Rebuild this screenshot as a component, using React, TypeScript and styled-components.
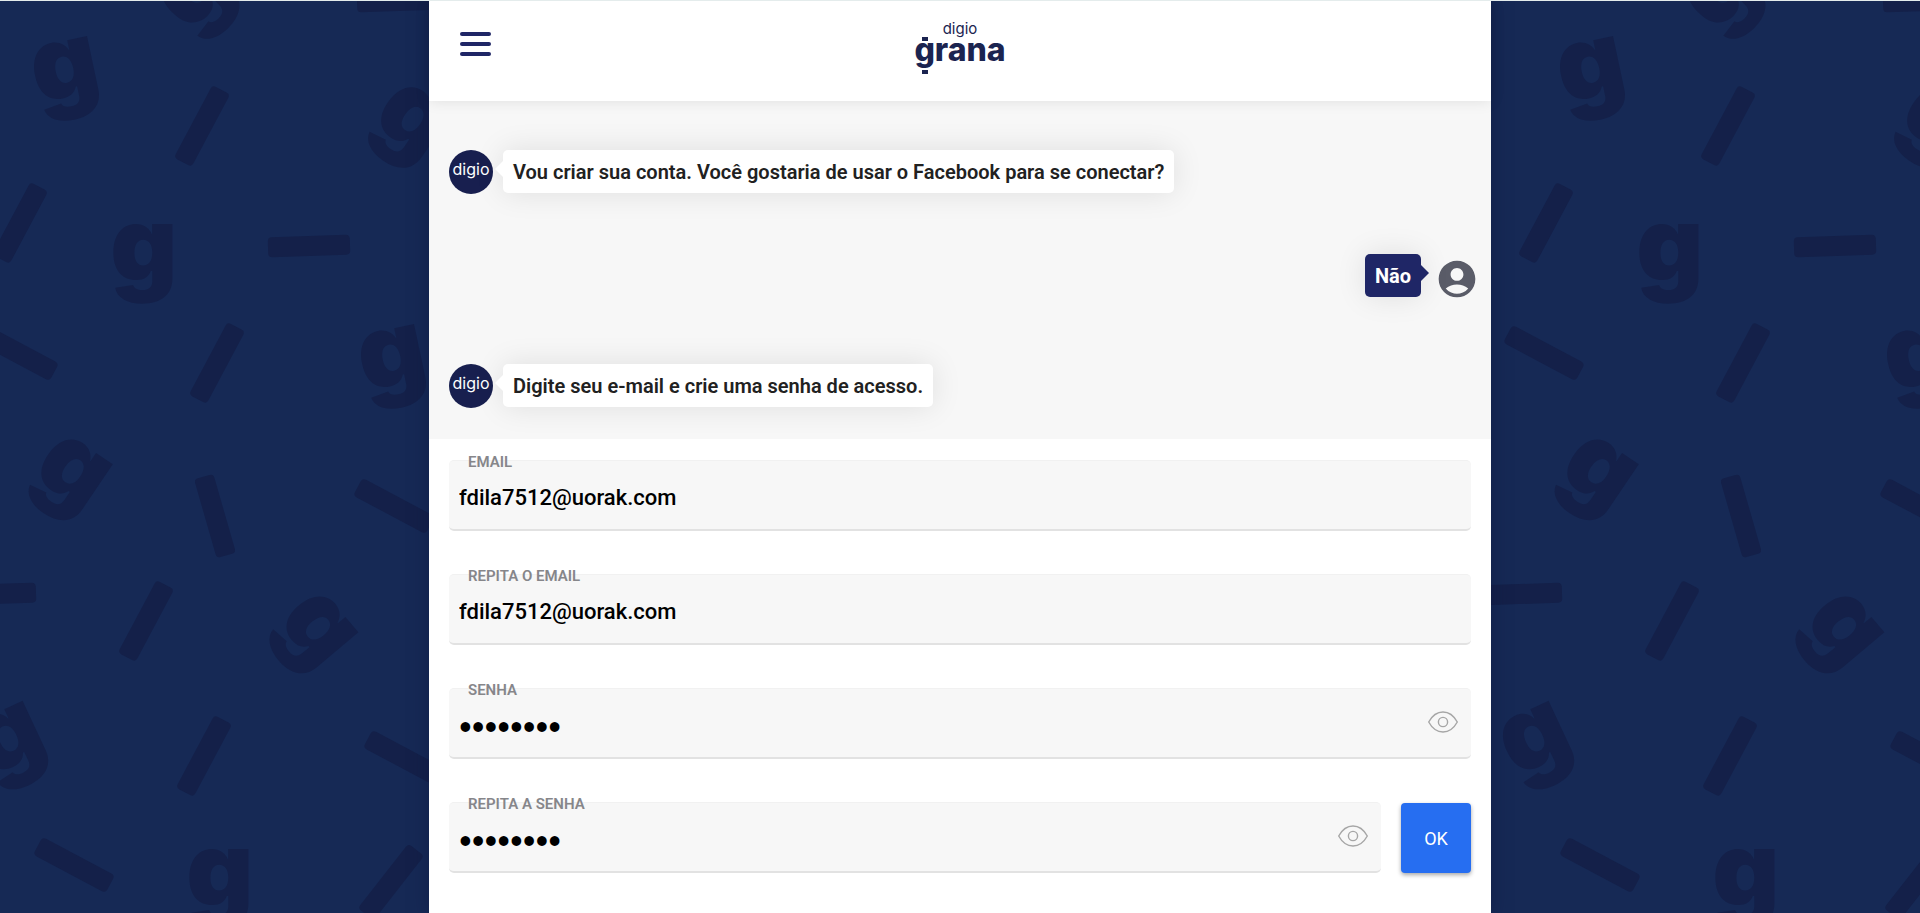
import React, { useState } from "react";
import styled, { createGlobalStyle, css } from "styled-components";
import { MdAccountCircle } from "react-icons/md";

const navy = "#1f2666";

const GlobalStyle = createGlobalStyle`
  *, *::before, *::after { box-sizing: border-box; }
  body {
    margin: 0;
    background: #162955;
    font-family: Roboto, "Liberation Sans", sans-serif;
  }
`;

const Page = styled.div`
  position: relative;
  display: flex;
  justify-content: center;
  min-height: 100vh;
  border-top: 1px solid #e4ecec;
  overflow: hidden;
`;

const Backdrop = styled.svg`
  position: absolute;
  inset: 0;
  width: 100%;
  height: 100%;
`;

const Panel = styled.main`
  position: relative;
  display: flex;
  flex-direction: column;
  width: 100%;
  max-width: 1062px;
  background: #fff;
  box-shadow: 0 0 16px rgba(12, 20, 60, 0.5);
`;

const Header = styled.header`
  position: relative;
  z-index: 1;
  display: grid;
  grid-template-columns: 1fr auto 1fr;
  align-items: start;
  height: 100px;
  padding: 16px 30px;
  background: #fff;
  box-shadow: 0 0 14px rgba(0, 0, 0, 0.1);
`;

const MenuButton = styled.button`
  display: flex;
  flex-direction: column;
  gap: 6px;
  justify-self: start;
  padding: 15px 1px;
  border: 0;
  background: none;
  cursor: pointer;
`;

const MenuLine = styled.span`
  width: 31px;
  height: 4px;
  border-radius: 2px;
  background: ${navy};
`;

const Logo = styled.svg`
  display: block;
  width: 100px;
  height: 64px;
  fill: #1b2450;
  font-family: Inter, sans-serif;
`;

const Chat = styled.section`
  display: flex;
  flex-direction: column;
  gap: 60px;
  padding: 49px 12px 31px 20px;
  background: #f7f7f7;
`;

const Message = styled.div<{ $mine?: boolean }>`
  display: flex;
  align-items: flex-start;
  gap: ${(p) => (p.$mine ? 14 : 10)}px;
  justify-content: ${(p) => (p.$mine ? "flex-end" : "flex-start")};
  min-height: ${(p) => (p.$mine ? 50 : 44)}px;
`;

const Bubble = styled.p<{ $mine?: boolean }>`
  position: relative;
  margin: 0;
  padding: 11px 10px 9px;
  border-radius: 5px;
  font-size: 20px;
  line-height: 23px;
  font-weight: ${(p) => (p.$mine ? 700 : 600)};
  color: ${(p) => (p.$mine ? "#fff" : "#212121")};
  background: ${(p) => (p.$mine ? navy : "#fff")};
  box-shadow: 0 0 30px rgba(0, 0, 0, 0.1);

  &::after {
    content: "";
    position: absolute;
    top: 11px;
    border: 8px solid transparent;
    ${(p) =>
      p.$mine
        ? css`
            left: 100%;
            border-left-color: ${navy};
            border-right-width: 0;
          `
        : css`
            right: 100%;
            border-right-color: #fff;
            border-left-width: 0;
          `}
  }
`;

const BotAvatar = styled.svg`
  flex: none;
  width: 44px;
  height: 44px;
  font-family: Inter, sans-serif;
`;

const UserAvatar = styled(MdAccountCircle)`
  flex: none;
  width: 44px;
  height: 44px;
  margin-top: 3px;
  color: #5a5c68;
`;

const Form = styled.form`
  display: flex;
  flex-direction: column;
  gap: 43px;
  padding: 21px 20px 40px;
`;

const FormRow = styled.div`
  display: flex;
  align-items: flex-end;
  gap: 20px;
`;

const Field = styled.div`
  position: relative;
  flex: 1;
  display: flex;
  align-items: center;
  height: 71px;
  padding-right: 12px;
  border-top: 1px solid #f1f1f1;
  border-bottom: 2px solid #e2e2e2;
  border-radius: 5px;
  background: #f7f7f7;
`;

const Label = styled.label`
  position: absolute;
  top: -7px;
  left: 19px;
  font-size: 15px;
  line-height: 16px;
  font-weight: 600;
  text-transform: uppercase;
  color: #86868a;
`;

const Input = styled.input`
  flex: 1;
  min-width: 0;
  height: 68px;
  padding: 4px 10px 0;
  border: 0;
  outline: 0;
  background: none;
  font-family: inherit;
  font-size: 22px;
  font-weight: 500;
  color: #000;

  &[type="password"] {
    font-family: Lato, sans-serif;
    font-weight: 700;
  }
`;

const EyeButton = styled.button`
  display: flex;
  padding: 0 0 2px;
  border: 0;
  background: none;
  cursor: pointer;
`;

const SubmitButton = styled.button`
  width: 70px;
  height: 70px;
  border: 0;
  border-radius: 4px;
  background: #266ef1;
  box-shadow: 0 2px 4px rgba(0, 0, 0, 0.35);
  font-family: inherit;
  font-size: 18px;
  color: #fff;
  cursor: pointer;
`;

// Confetti of the backdrop: [centre x, centre y, rotation in degrees]
const bars = [
  [398, 0, -2],
  [202, 125, -62],
  [20, 222, -62],
  [309, 245, -2],
  [18, 352, 28],
  [217, 362, -62],
  [215, 515, 74],
  [394, 505, 28],
  [-5, 593, -2],
  [146, 620, -62],
  [204, 755, -62],
  [404, 757, 28],
  [74, 864, 28],
  [391, 881, -52],
];

const letters = [
  [65, 69, -12],
  [194, -10, -44],
  [413, 119, 35],
  [144, 252, 0],
  [392, 357, -12],
  [73, 471, 34],
  [318, 628, 50],
  [9, 738, -25],
  [220, 877, 0],
];

function Confetti() {
  return (
    <Backdrop aria-hidden="true">
      <defs>
        <g id="confetti" fill="#142049">
          {bars.map(([x, y, angle]) => (
            <rect
              key={`${x}-${y}`}
              x={-41}
              y={-10}
              width={82}
              height={20}
              rx={4}
              transform={`translate(${x} ${y}) rotate(${angle})`}
            />
          ))}
          {letters.map(([x, y, angle]) => (
            <text
              key={`${x}-${y}`}
              x={0}
              y={28}
              textAnchor="middle"
              fontFamily="Inter, sans-serif"
              fontWeight={900}
              fontSize={104}
              transform={`translate(${x} ${y}) rotate(${angle})`}
            >
              g
            </text>
          ))}
        </g>
      </defs>
      <use href="#confetti" />
      <use href="#confetti" x={1526} />
    </Backdrop>
  );
}

function EyeIcon() {
  return (
    <svg width="32" height="24" viewBox="0 0 32 24" fill="none" stroke="#a6a6a6" strokeWidth="1.4" aria-hidden="true">
      <path d="M1.7 12C5 6 10 2 16 2s11 4 14.300 10C27 18 22 22 16 22S5 18 1.700 12Z" strokeLinejoin="round" />
      <circle cx="16" cy="12" r="4.600" />
    </svg>
  );
}

function BotMessage({ children }: { children: React.ReactNode }) {
  return (
    <Message>
      <BotAvatar viewBox="0 0 44 44" role="img" aria-label="digio">
        <circle cx="22" cy="22" r="22" fill="#181f4f" />
        <text x="22" y="25" textAnchor="middle" fontSize="16" fill="#fff">
          digio
        </text>
      </BotAvatar>
      <Bubble>{children}</Bubble>
    </Message>
  );
}

type FieldProps = { id: string; label: string; initial: string; secret?: boolean };

function TextField({ id, label, initial, secret }: FieldProps) {
  const [value, setValue] = useState(initial);
  const [visible, setVisible] = useState(false);
  return (
    <Field>
      <Label htmlFor={id}>{label}</Label>
      <Input
        id={id}
        type={secret && !visible ? "password" : "text"}
        value={value}
        autoComplete="off"
        onChange={(e) => setValue(e.target.value)}
      />
      {secret && (
        <EyeButton type="button" aria-label="Mostrar senha" onClick={() => setVisible(!visible)}>
          <EyeIcon />
        </EyeButton>
      )}
    </Field>
  );
}

export default function App() {
  return (
    <>
      <GlobalStyle />
      <Page>
        <Confetti />
        <Panel>
          <Header>
            <MenuButton type="button" aria-label="Menu">
              <MenuLine />
              <MenuLine />
              <MenuLine />
            </MenuButton>
            <Logo viewBox="0 0 100 64" role="img" aria-label="digio grana">
              <text x="50" y="17" textAnchor="middle" fontSize="15">
                digio
              </text>
              <text x="50" y="44" textAnchor="middle" fontSize="32" fontWeight="800">
                grana
              </text>
              <rect x="12" y="20" width="6" height="4" />
              <rect x="12" y="53" width="6" height="4" />
            </Logo>
          </Header>
          <Chat>
            <BotMessage>Vou criar sua conta. Você gostaria de usar o Facebook para se conectar?</BotMessage>
            <Message $mine>
              <Bubble $mine>Não</Bubble>
              <UserAvatar aria-hidden="true" />
            </Message>
            <BotMessage>Digite seu e-mail e crie uma senha de acesso.</BotMessage>
          </Chat>
          <Form onSubmit={(e) => e.preventDefault()}>
            <FormRow>
              <TextField id="email" label="Email" initial="fdila7512@uorak.com" />
            </FormRow>
            <FormRow>
              <TextField id="email-repeat" label="Repita o email" initial="fdila7512@uorak.com" />
            </FormRow>
            <FormRow>
              <TextField id="password" label="Senha" initial="senha123" secret />
            </FormRow>
            <FormRow>
              <TextField id="password-repeat" label="Repita a senha" initial="senha123" secret />
              <SubmitButton type="submit">OK</SubmitButton>
            </FormRow>
          </Form>
        </Panel>
      </Page>
    </>
  );
}
